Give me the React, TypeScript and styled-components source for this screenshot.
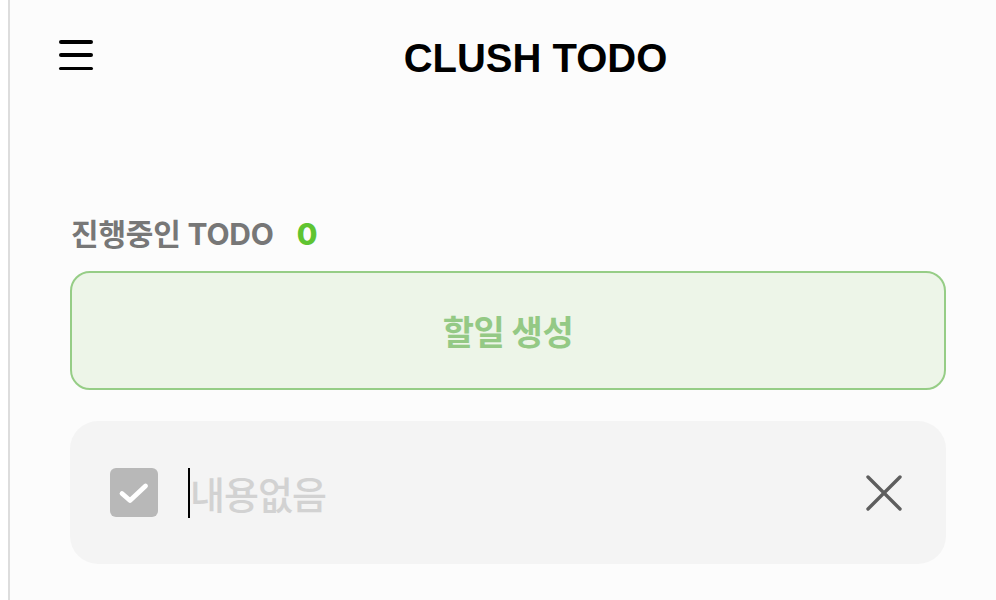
import React from "react";
import styled, { createGlobalStyle } from "styled-components";

const GlobalStyle = createGlobalStyle`
  html, body { margin: 0; padding: 0; background: #ffffff; }
  body { font-family: Inter, "Noto Sans CJK KR", sans-serif; }
  * { box-sizing: border-box; }
`;

const Shell = styled.div`
  display: flex;
  min-height: 600px;
  padding-left: 8px;
  background: #ffffff;
`;

const Main = styled.main`
  flex: 1;
  border-left: 2px solid #dddddd;
  background: #fcfcfc;
  padding: 0 50px 0 60px;
  display: flex;
  flex-direction: column;
`;

const Header = styled.header`
  height: 114px;
  display: flex;
  align-items: center;
  margin-left: -11px;
  padding-top: 2px;
`;

const MenuButton = styled.button`
  width: 34px;
  height: 30px;
  padding: 0;
  border: 0;
  background: transparent;
  display: flex;
  flex-direction: column;
  justify-content: space-between;
  cursor: pointer;
  margin-top: -6px;
`;

const MenuLine = styled.span`
  display: block;
  width: 34px;
  height: 3.5px;
  border-radius: 2px;
  background: #000000;
`;

const Title = styled.h1`
  flex: 1;
  margin: 0 0 0 32px;
  text-align: center;
  font-family: "Liberation Sans", Arial, sans-serif;
  font-weight: 700;
  font-size: 40px;
  color: #000000;
`;

const Section = styled.section`
  margin-top: 98px;
  display: flex;
  flex-direction: column;
`;

const SectionLabel = styled.div`
  display: flex;
  align-items: baseline;
  gap: 23px;
  padding-left: 1px;
  font-family: Inter, "Noto Sans CJK KR", sans-serif;
  font-weight: 700;
  font-size: 30px;
  line-height: 44px;
  color: #777777;
  letter-spacing: -0.2px;
`;

const Count = styled.span`
  color: #5fc431;
  font-family: Inter, sans-serif;
  font-weight: 800;
`;

const CreateButton = styled.button`
  margin-top: 15px;
  height: 119px;
  border: 2px solid #96cd86;
  border-radius: 20px;
  background: #edf5e8;
  color: #94c985;
  font-family: "Noto Sans CJK KR", sans-serif;
  font-weight: 700;
  font-size: 34px;
  letter-spacing: -0.5px;
  cursor: pointer;
`;

const TodoItem = styled.div`
  margin-top: 31px;
  height: 143px;
  border-radius: 28px;
  background: #f4f4f4;
  display: flex;
  align-items: center;
  padding: 0 44px 0 40px;
`;

const CheckBox = styled.span`
  width: 48px;
  height: 49px;
  flex: none;
  border-radius: 6px;
  background: #b8b8b8;
  display: flex;
  align-items: center;
  justify-content: center;
`;

const TextInput = styled.input`
  flex: 1;
  margin-left: 30px;
  height: 50px;
  border: 0;
  outline: none;
  background: transparent;
  padding: 0;
  font-family: "Noto Sans CJK KR", sans-serif;
  font-weight: 500;
  font-size: 38px;
  letter-spacing: -1px;
  color: #222;
  caret-color: #000;
  border-left: 2px solid #000;
  &::placeholder { color: #d2d2d2; }
`;

const CloseButton = styled.button`
  width: 36px;
  height: 36px;
  padding: 0;
  border: 0;
  background: transparent;
  display: flex;
  align-items: center;
  justify-content: center;
  cursor: pointer;
`;

export default function App() {
  return (
    <>
      <GlobalStyle />
      <Shell>
        <Main>
          <Header>
            <MenuButton aria-label="menu">
              <MenuLine />
              <MenuLine />
              <MenuLine />
            </MenuButton>
            <Title>CLUSH TODO</Title>
          </Header>
          <Section>
            <SectionLabel>
              <span>진행중인 TODO</span>
              <Count>0</Count>
            </SectionLabel>
            <CreateButton>할일 생성</CreateButton>
            <TodoItem>
              <CheckBox>
                <svg width="32" height="26" viewBox="0 0 32 26" fill="none">
                  <path d="M4 13.5 L12 20.5 L27.5 6" stroke="#ffffff" strokeWidth="4.8" strokeLinecap="round" strokeLinejoin="round" />
                </svg>
              </CheckBox>
              <TextInput placeholder="내용없음" readOnly />
              <CloseButton aria-label="delete">
                <svg width="36" height="36" viewBox="0 0 36 36" fill="none">
                  <path d="M2 2 L34 34 M34 2 L2 34" stroke="#5e5e5e" strokeWidth="3.4" strokeLinecap="round" />
                </svg>
              </CloseButton>
            </TodoItem>
          </Section>
        </Main>
      </Shell>
    </>
  );
}
